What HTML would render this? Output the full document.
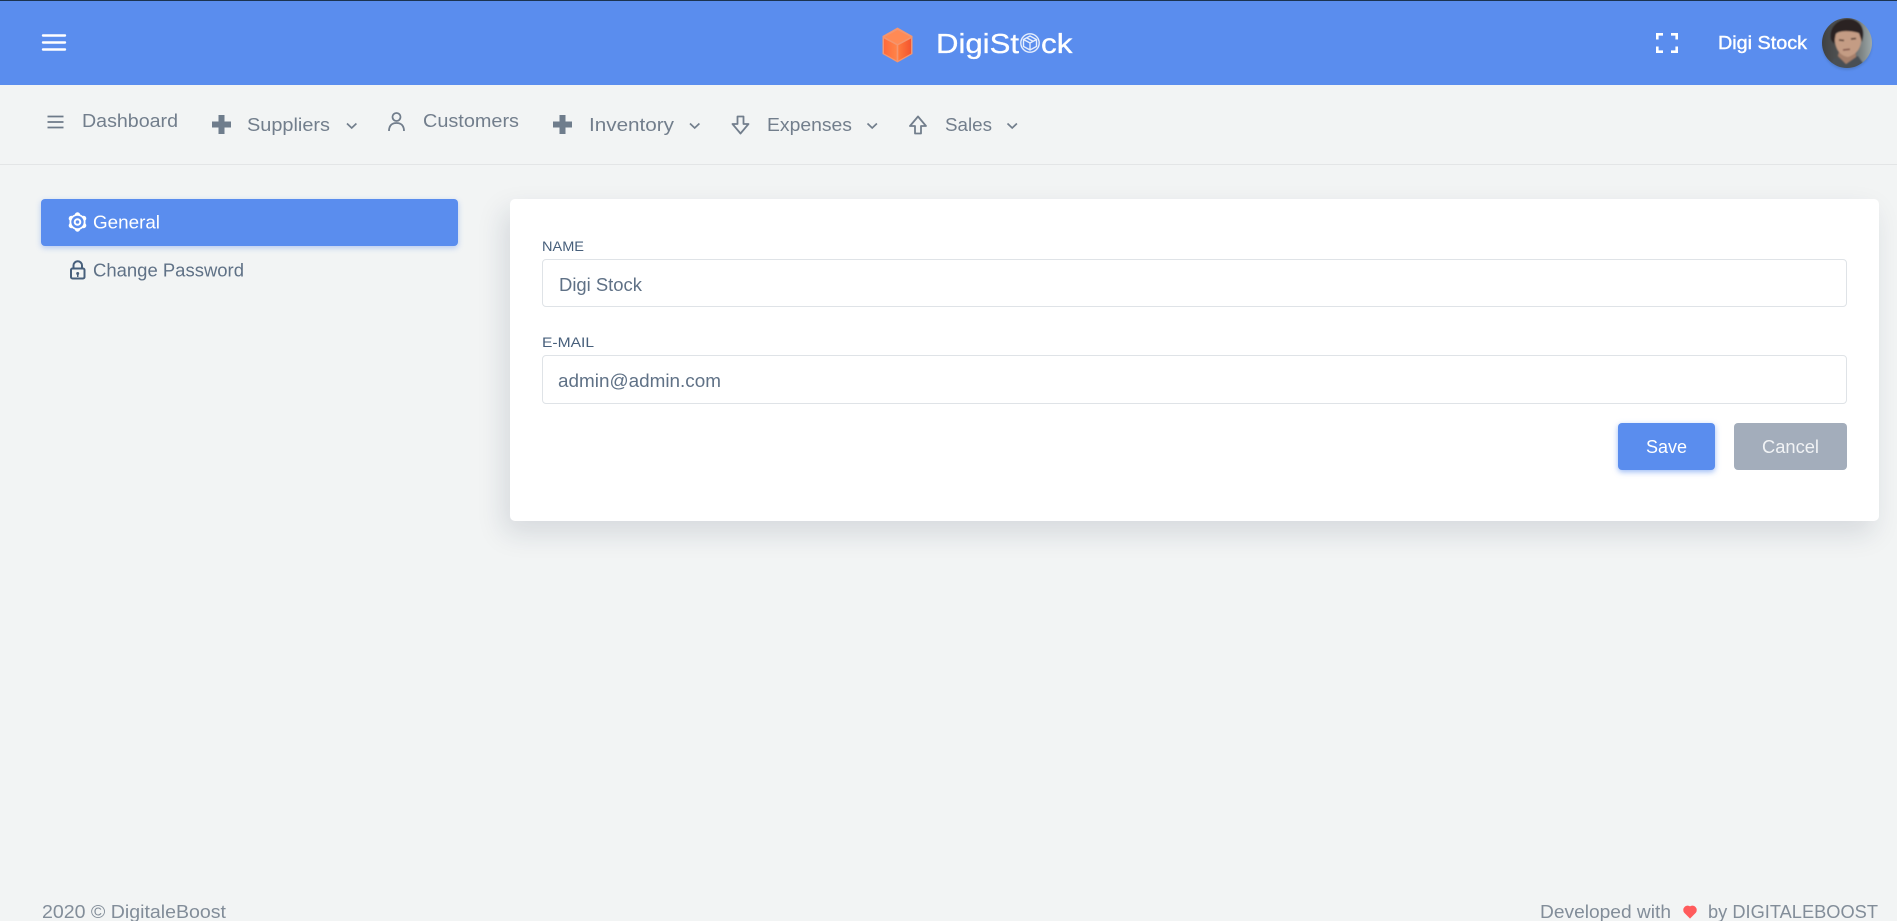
<!DOCTYPE html>
<html><head><meta charset="utf-8"><title>DigiStock</title>
<style>
html,body{margin:0;padding:0;width:1897px;height:921px;overflow:hidden;background:#f2f4f4;font-family:"Liberation Sans",sans-serif}
.a{position:absolute;box-sizing:border-box}
svg{position:absolute;left:0;top:0}
text{font-family:"Liberation Sans",sans-serif}
</style></head><body>
<div class="a" style="left:0;top:0;width:1897px;height:85px;background:#5a8dee;border-top:1px solid #1b3350"></div>
<div class="a" style="left:0;top:164px;width:1897px;height:1px;background:#e3e5e6"></div>
<div class="a" style="left:41px;top:199px;width:417px;height:47px;background:#5a8dee;border-radius:4px;box-shadow:0 2px 6px rgba(90,141,238,.4)"></div>
<div class="a" style="left:510px;top:199px;width:1369px;height:322px;background:#fff;border-radius:5px;box-shadow:-6px 12px 28px rgba(25,42,70,.13)"></div>
<div class="a" style="left:542px;top:259px;width:1305px;height:48px;background:#fff;border:1px solid #dfe3e7;border-radius:4px"></div>
<div class="a" style="left:542px;top:355px;width:1305px;height:49px;background:#fff;border:1px solid #dfe3e7;border-radius:4px"></div>
<div class="a" style="left:1618px;top:423px;width:97px;height:47px;background:#5a8dee;border-radius:4px;box-shadow:0 2px 6px rgba(90,141,238,.6)"></div>
<div class="a" style="left:1734px;top:423px;width:113px;height:47px;background:#a3adbb;border-radius:4px"></div>
<svg width="1897" height="921" viewBox="0 0 1897 921">
<defs>
<linearGradient id="cr" x1="0" x2="1"><stop offset="0" stop-color="#ff7a3d"/><stop offset="1" stop-color="#f4552f"/></linearGradient>
<linearGradient id="cl" x1="0" x2="1"><stop offset="0" stop-color="#ff6a3a"/><stop offset="1" stop-color="#ff8348"/></linearGradient>
<linearGradient id="avbg" x1="0" x2="1"><stop offset="0" stop-color="#3d3f40"/><stop offset=".55" stop-color="#5a5c5c"/><stop offset="1" stop-color="#a4b0b0"/></linearGradient>
<clipPath id="av"><circle cx="1847" cy="43" r="25"/></clipPath>
<filter id="b1"><feGaussianBlur stdDeviation="1"/></filter>
<filter id="b2"><feGaussianBlur stdDeviation=".7"/></filter>
</defs>
<!-- hamburger -->
<g stroke="#fff" stroke-width="2.4" stroke-linecap="round"><path d="M43 35.500H65M43 42.500H65M43 49.500H65"/></g>
<!-- logo -->
<path d="M897.500 27.500L912.500 36V54L897.500 62.500L882.500 54V36Z" fill="#f4956f"/>
<path d="M897.500 30L910.500 37L897.500 44L884.500 37Z" fill="#ff8a55"/>
<path d="M884 38.500L896.700 45.300V60.500L884 53.500Z" fill="url(#cl)"/>
<path d="M911 38.500L898.300 45.300V60.500L911 53.500Z" fill="url(#cr)"/>
<text x="936" y="53" font-size="28" fill="#fff" stroke="#fff" stroke-width=".3" textLength="83" lengthAdjust="spacingAndGlyphs">DigiSt</text>
<text x="1041" y="53" font-size="28" fill="#fff" stroke="#fff" stroke-width=".3" textLength="31.500" lengthAdjust="spacingAndGlyphs">ck</text>
<g fill="none" stroke="#e6eefc" stroke-width="1.400"><circle cx="1030" cy="43" r="9.200"/><path d="M1023.500 39.500l6.500-3.500 6.500 3.500v7l-6.500 3.500-6.500-3.500zM1023.500 39.500l6.500 3.500 6.500-3.500M1030 43v7M1026.500 37.800l6.500 3.500"/></g>
<!-- fullscreen -->
<g fill="none" stroke="#fff" stroke-width="2.600"><path d="M1657.300 39.500V34.300H1663M1671 34.300H1676.700V39.500M1676.700 46.500V51.700H1671M1663 51.700H1657.300V46.500"/></g>
<text x="1718" y="49" font-size="18" fill="#fff" stroke="#fff" stroke-width=".4" textLength="89" lengthAdjust="spacingAndGlyphs">Digi Stock</text>
<!-- avatar -->
<circle cx="1847" cy="45" r="25" fill="#33506f" opacity=".25" filter="url(#b1)"/>
<g clip-path="url(#av)"><g filter="url(#b2)">
<rect x="1820" y="16" width="54" height="54" fill="url(#avbg)"/>
<path d="M1828 70L1834 58L1845 60L1858 56L1868 70Z" fill="#4a4f54"/>
<path d="M1838 56L1846 64L1856 57L1855 48H1840Z" fill="#a67f6a"/>
<path d="M1835 36C1835 30 1858 28 1861 36C1862 46 1858 54 1848 57C1840 56 1834 48 1835 36Z" fill="#c49c84"/>
<path d="M1831 40C1828 26 1840 18 1850 19C1861 20 1866 30 1862 42L1859 33C1852 31 1842 30 1836 33L1834 44Z" fill="#2b2320"/>
<path d="M1839 40l5 .5M1851 39l5-.5" stroke="#4a332a" stroke-width="1.500"/>
<path d="M1843 50l7-.8" stroke="#7d4f45" stroke-width="1.500"/>
</g></g>
<!-- nav -->
<g stroke="#6d7a89" stroke-width="1.800" fill="none"><path d="M47.500 116.500H63.500M47.500 122H63.500M47.500 127.500H63.500"/></g>
<text x="82" y="127" font-size="18" fill="#727e8c" textLength="96" lengthAdjust="spacingAndGlyphs">Dashboard</text>
<path d="M218.500 115h6v6.500h6.500v6h-6.500v6.500h-6v-6.500H212v-6h6.500z" fill="#6f7d8c"/>
<text x="247" y="131" font-size="18" fill="#727e8c" textLength="83" lengthAdjust="spacingAndGlyphs">Suppliers</text>
<path d="M347 123.500L351.700 128L356.400 123.500" fill="none" stroke="#727e8c" stroke-width="1.700"/>
<g fill="none" stroke="#727e8c" stroke-width="1.800"><circle cx="396.500" cy="117" r="4"/><path d="M389 131c0-5.500 3-8 7.500-8s7.500 2.500 7.500 8"/></g>
<text x="423" y="127" font-size="18" fill="#727e8c" textLength="96" lengthAdjust="spacingAndGlyphs">Customers</text>
<path d="M559.500 115h6v6.500h6.500v6h-6.500v6.500h-6v-6.500H553v-6h6.500z" fill="#6f7d8c"/>
<text x="589" y="131" font-size="18" fill="#727e8c" textLength="85" lengthAdjust="spacingAndGlyphs">Inventory</text>
<path d="M690 123.500L694.700 128L699.400 123.500" fill="none" stroke="#727e8c" stroke-width="1.700"/>
<path d="M737.500 116.500h6v7.500h5l-8 9.500-8-9.500h5z" fill="none" stroke="#727e8c" stroke-width="1.800" stroke-linejoin="round"/>
<text x="767" y="131" font-size="18" fill="#727e8c" textLength="85" lengthAdjust="spacingAndGlyphs">Expenses</text>
<path d="M867.500 123.500L872.200 128L876.900 123.500" fill="none" stroke="#727e8c" stroke-width="1.700"/>
<path d="M915 133.500h6V126h5l-8-9.500-8 9.500h5z" fill="none" stroke="#727e8c" stroke-width="1.800" stroke-linejoin="round"/>
<text x="945" y="131" font-size="18" fill="#727e8c" textLength="47" lengthAdjust="spacingAndGlyphs">Sales</text>
<path d="M1007.500 123.500L1012.200 128L1016.900 123.500" fill="none" stroke="#727e8c" stroke-width="1.700"/>
<!-- sidebar -->
<g fill="#fff"><circle cx="77.500" cy="222" r="8"/><circle cx="77.500" cy="215" r="2.700"/><circle cx="77.500" cy="229" r="2.700"/><circle cx="71.400" cy="218.500" r="2.700"/><circle cx="83.600" cy="218.500" r="2.700"/><circle cx="71.400" cy="225.500" r="2.700"/><circle cx="83.600" cy="225.500" r="2.700"/></g>
<circle cx="77.500" cy="222" r="6.200" fill="#5a8dee"/><circle cx="77.500" cy="222" r="3.800" fill="#fff"/><circle cx="77.500" cy="222" r="1.800" fill="#5a8dee"/>
<text x="93" y="228.500" font-size="18" fill="#fff" textLength="67" lengthAdjust="spacingAndGlyphs">General</text>
<g fill="none" stroke="#475f7b" stroke-width="2"><rect x="71" y="268.500" width="13.500" height="10" rx="1.500"/><path d="M73.500 268.500v-3a4.200 4.200 0 0 1 8.500 0v3"/></g>
<circle cx="77.700" cy="273.500" r="1.500" fill="#475f7b"/><rect x="77" y="274" width="1.500" height="3" fill="#475f7b"/>
<text x="93" y="276.500" font-size="18" fill="#5f7186" textLength="151" lengthAdjust="spacingAndGlyphs">Change Password</text>
<!-- form -->
<text x="542" y="251" font-size="14" fill="#475f7b" textLength="42" lengthAdjust="spacingAndGlyphs">NAME</text>
<text x="559" y="291" font-size="18" fill="#5f7186" textLength="83" lengthAdjust="spacingAndGlyphs">Digi Stock</text>
<text x="542" y="347" font-size="14" fill="#475f7b" textLength="52" lengthAdjust="spacingAndGlyphs">E-MAIL</text>
<text x="558" y="387" font-size="18" fill="#5f7186" textLength="163" lengthAdjust="spacingAndGlyphs">admin@admin.com</text>
<text x="1646" y="453" font-size="18" fill="#fff" textLength="41" lengthAdjust="spacingAndGlyphs">Save</text>
<text x="1762" y="453" font-size="18" fill="#f1f3f5" textLength="57" lengthAdjust="spacingAndGlyphs">Cancel</text>
<!-- footer -->
<text x="42" y="918" font-size="18" fill="#828d99" textLength="184" lengthAdjust="spacingAndGlyphs">2020 © DigitaleBoost</text>
<text x="1540" y="918" font-size="18" fill="#828d99" textLength="131" lengthAdjust="spacingAndGlyphs">Developed with</text>
<path d="M1690 918L1684.500 912.500a4 4 0 0 1 5.500-5.700a4 4 0 0 1 5.500 5.700z" fill="#ff5b5c" stroke="#ff5b5c" stroke-width=".8"/>
<text x="1708" y="918" font-size="18" fill="#828d99" textLength="170" lengthAdjust="spacingAndGlyphs">by DIGITALEBOOST</text>
</svg>
</body></html>
